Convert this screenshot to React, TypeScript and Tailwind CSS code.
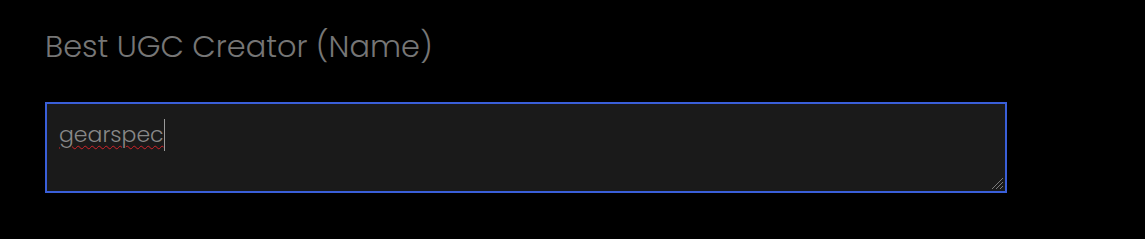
import React from "react";

export default function App() {
  return (
    <div className="w-[1145px] h-[239px] bg-black pl-[45px] pt-[26px]" style={{ fontFamily: '"Poppins", "Lato", "Open Sans", sans-serif' }}>
      <div className="text-[30.4px] font-light text-[#767676] leading-[42px]">Best UGC Creator (Name)</div>
      <div className="mt-[34px] relative w-[962px] h-[91px] border-2 border-[#3a5fd9] bg-[#1a1a1a] px-[12px] pt-[15px]">
        <div className="flex items-center text-[22px] font-light text-[#888888] leading-[32px]">
          <span className="underline decoration-wavy decoration-[#d0232a] decoration-1 underline-offset-[3px]">gearspec</span>
          <span className="inline-block w-px h-[32px] bg-[#9a9a9a]" />
        </div>
        <svg className="absolute right-[1px] bottom-[1px]" width="14" height="14" viewBox="0 0 14 14">
          <line x1="13" y1="2" x2="2" y2="13" stroke="#7a7a7a" strokeWidth="1" />
          <line x1="13" y1="6" x2="6" y2="13" stroke="#7a7a7a" strokeWidth="1" />
          <line x1="13" y1="10" x2="10" y2="13" stroke="#7a7a7a" strokeWidth="1" />
        </svg>
      </div>
    </div>
  );
}
